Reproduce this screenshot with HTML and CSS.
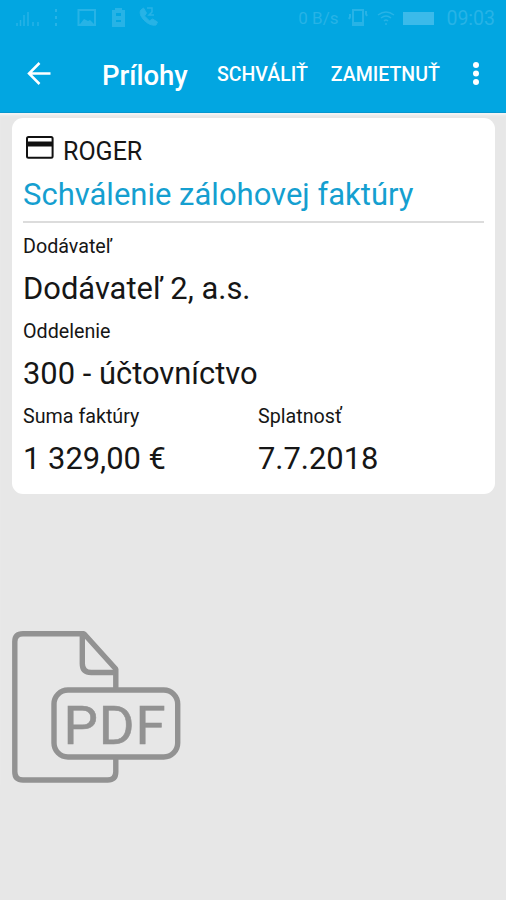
FILE: index.html
```html
<!DOCTYPE html>
<html lang="sk">

<head>
    <meta charset="UTF-8">
    <title>Prílohy</title>
    <link rel="stylesheet" href="styles.css">
</head>

<body>
    <header class="app-bar">
        <div class="status-bar">
            <svg class="status-icons" width="170" height="36" viewBox="0 0 170 36" fill="none" stroke="currentColor" stroke-width="2">
                <path d="M17 26v-3M20.500 26v-6M24 26V15M28 26V12M33 26v-4M38 26v-4" stroke-width="1.500" />
                <path d="M56 9v3M56 16v3M56 23v3" />
                <path d="M78.500 10h16.500v15h-16.500z" />
                <path d="M80 24l4-5 4 2 2-1 4 4z" fill="currentColor" stroke="none" />
                <path fill-rule="evenodd" d="M112 10h3V8h7v2h3v17h-13zM116 13v3h5v-3zM116 20v2h5v-2z" fill="currentColor" stroke="none" />
                <path d="M141 10c-4 5 7 17 15 15l1.500-3-5-3-3 2-5-5 2-3-3-5z" fill="currentColor" stroke-width="1" />
                <path d="M147 8h5v4l-3 3h5" stroke-width="1.500" />
            </svg>
            <div class="status-right">
                <span class="speed">0 B/s</span>
                <svg width="20" height="20" viewBox="0 0 20 20" fill="none" stroke="currentColor" stroke-width="2">
                    <path d="M5 2h10v15H5zM2 6v3l-1 2M18 3v3l1 2M6 15h8" />
                </svg>
                <svg class="wifi" width="18" height="18" viewBox="0 0 18 18" fill="none" stroke="currentColor" stroke-width="1.500">
                    <path d="M1 6q8-6 16 0M4 9q5-4 10 0M7 12q2-2 4 0M8 15h2" />
                </svg>
                <span class="battery"></span>
                <span class="clock">09:03</span>
            </div>
        </div>
        <div class="toolbar">
            <svg class="back" width="24" height="24" viewBox="0 0 24 24" fill="none" stroke="currentColor" stroke-width="2.500">
                <path d="M23.500 11.500H2.500M12.500 1L2 11.500 12.500 22" />
            </svg>
            <h1>Prílohy</h1>
            <span class="action approve">SCHVÁLIŤ</span>
            <span class="action reject">ZAMIETNUŤ</span>
            <svg class="more" width="8" height="24" viewBox="0 0 8 24" fill="currentColor">
                <circle cx="4" cy="3" r="3" />
                <circle cx="4" cy="11.500" r="3" />
                <circle cx="4" cy="20" r="3" />
            </svg>
        </div>
    </header>

    <main>
        <section class="card">
            <div class="card-head">
                <svg width="28" height="24" viewBox="0 0 28 24">
                    <rect x="1" y="1" width="25.600" height="20.800" rx="1.500" fill="none" stroke="#111" stroke-width="2" />
                    <path d="M1 5.500h26v5H1z" fill="#111" />
                </svg>
                <span>ROGER</span>
            </div>
            <h2>Schválenie zálohovej faktúry</h2>
            <dl class="fields">
                <div class="field wide">
                    <dt>Dodávateľ</dt>
                    <dd>Dodávateľ 2, a.s.</dd>
                </div>
                <div class="field wide">
                    <dt>Oddelenie</dt>
                    <dd>300 - účtovníctvo</dd>
                </div>
                <div class="field">
                    <dt>Suma faktúry</dt>
                    <dd>1 329,00 €</dd>
                </div>
                <div class="field">
                    <dt>Splatnosť</dt>
                    <dd>7.7.2018</dd>
                </div>
            </dl>
        </section>

        <svg class="pdf" width="170" height="156" viewBox="0 0 170 156" fill="none" stroke="#929292" stroke-width="5.400">
            <path d="M103.800 61V40L72 4.800H11q-8.200 0-8.200 8v130q0 8.200 8.200 8.200h84.600q8.200 0 8.200-8.200V128" stroke-linejoin="bevel" />
            <path d="M70.300 6v28.500q0 9 9 9h24.500" />
            <rect x="42" y="61" width="123.700" height="67" rx="14" />
            <text x="51.500" y="114.500" textLength="102" lengthAdjust="spacing">PDF</text>
        </svg>
    </main>
</body>

</html>
```
FILE: styles.css
```css
body {
    margin: 0;
    min-height: 100vh;
    background: #e7e7e7;
    font-family: Roboto, sans-serif;
    color: #161616;
    overflow: hidden;
}

svg {
    display: block;
    flex: none;
}

.app-bar {
    height: 113px;
    background: #02a6e1;
    color: #fff;
    box-sizing: border-box;
    border-bottom: 1px solid #0797cf;
}

.status-bar {
    display: flex;
    justify-content: space-between;
    height: 36px;
    color: #27b3e6;
}

.status-right {
    display: flex;
    align-items: center;
    padding-right: 11px;
}

.speed {
    font-size: 17px;
    margin-right: 10px;
}

.wifi {
    margin: 0 8px 0 9px;
}

.battery {
    width: 31px;
    height: 13px;
    margin-right: 12px;
    background: #3bbaea;
}

.clock {
    font-size: 19.5px;
}

.toolbar {
    display: flex;
    align-items: center;
    height: 76px;
    padding: 0 26px 0 27px;
}

.toolbar h1 {
    width: 115px;
    margin: 2px 0 0 51px;
    font-size: 27.5px;
    font-weight: 500;
}

.action {
    font-size: 19.5px;
    font-weight: 500;
    white-space: nowrap;
}

.reject {
    margin-left: 23px;
}

.more {
    margin-left: auto;
}

main {
    padding: 5px 11px 0 12px;
    box-shadow: inset 0 3px 2px -1px #f5f5f5;
}

.card {
    box-sizing: border-box;
    height: 376px;
    padding: 14px 11px 0;
    background: #fff;
    border-radius: 11px;
}

.card-head {
    display: flex;
    align-items: center;
    gap: 9px;
    height: 38px;
    padding-left: 3px;
    font-size: 25px;
}

.card-head svg {
    margin-top: -7px;
}

.card h2 {
    margin: 0;
    padding: 2px 0 3px;
    border-bottom: 2px solid #dcdcdc;
    color: #159fd0;
    font-size: 31px;
    font-weight: 400;
    line-height: 46px;
    white-space: nowrap;
}

.fields {
    display: grid;
    grid-template-columns: 235px 1fr;
    margin: 5px 0 0;
}

.wide {
    grid-column: 1 / -1;
}

dt {
    font-size: 19.7px;
    line-height: 37px;
}

dd {
    margin: 0;
    font-size: 30.9px;
    line-height: 48px;
}

.pdf {
    margin-top: 135px;
}

.pdf text {
    fill: #929292;
    stroke: #929292;
    stroke-width: 0.6px;
    font-size: 54.5px;
}
```
